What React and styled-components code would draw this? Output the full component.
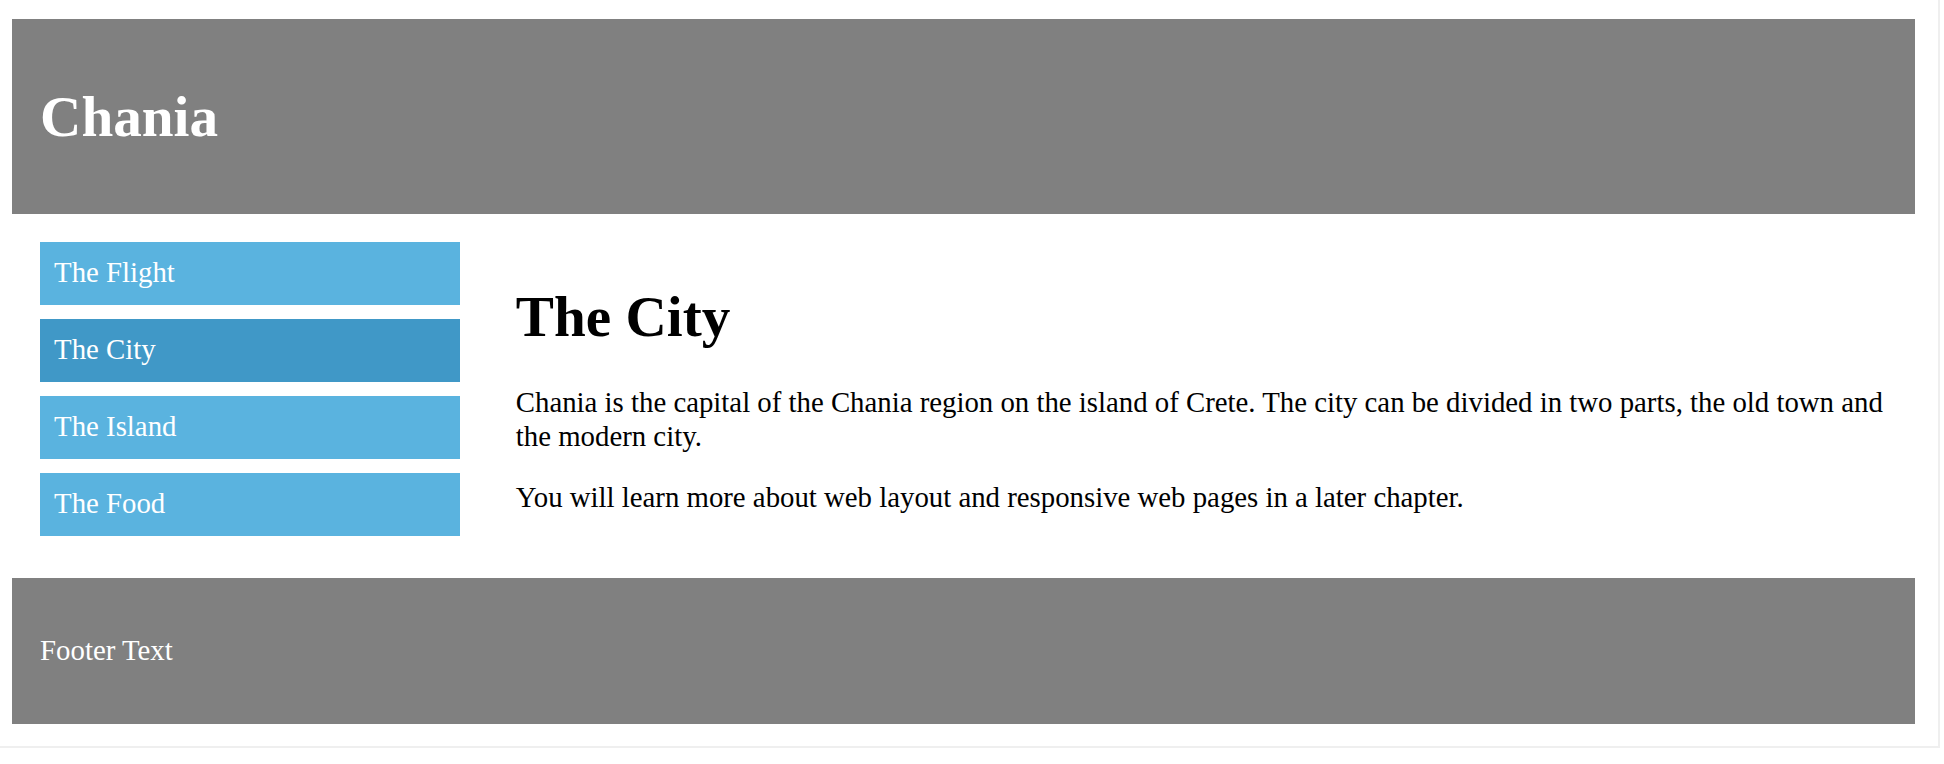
import React from "react";
import styled, { createGlobalStyle } from "styled-components";

const GlobalStyle = createGlobalStyle`
  html, body {
    margin: 0;
    padding: 0;
    background: #ffffff;
  }
  body {
    font-family: "Liberation Serif", "Times New Roman", Times, serif;
    font-size: 28.8px;
    color: #000000;
  }
`;

const Frame = styled.div`
  box-sizing: border-box;
  width: 1940px;
  height: 748px;
  padding: 18.6px 22.6px 0 12.4px;
  border-right: 2px solid #efefef;
  border-bottom: 2px solid #efefef;
`;

const Header = styled.header`
  background-color: #808080;
  color: #ffffff;
  padding: 27.7px;
`;

const Title = styled.h1`
  margin: 37.5px 0;
  font-size: 57.2px;
  line-height: 65.4px;
  font-weight: bold;
`;

const Row = styled.div`
  display: flex;
  align-items: flex-start;
`;

const Column = styled.div`
  box-sizing: border-box;
  width: ${(p) => p.$span}%;
  padding: 27.7px;
`;

const Menu = styled.ul`
  list-style: none;
  margin: 0;
  padding: 0;
`;

const MenuItem = styled.li`
  padding: 13.5px 14px 16.5px;
  margin-bottom: 14px;
  line-height: 33px;
  color: #ffffff;
  background-color: ${(p) => (p.$active ? "#4098c7" : "#5ab3df")};
`;

const Heading = styled.h1`
  margin: 41.5px 0 37.5px;
  font-size: 57.2px;
  line-height: 65.3px;
  font-weight: bold;
`;

const Text = styled.p`
  margin: 28.4px 0;
  line-height: 33.3px;
`;

const Footer = styled.footer`
  background-color: #808080;
  color: #ffffff;
  padding: 27.7px 27.7px 28.4px;
`;

const menu = ["The Flight", "The City", "The Island", "The Food"];

export default function App() {
  return (
    <>
      <GlobalStyle />
      <Frame>
        <Header>
          <Title>Chania</Title>
        </Header>
        <Row>
          <Column $span={25}>
            <Menu>
              {menu.map((item) => (
                <MenuItem key={item} $active={item === "The City"}>
                  {item}
                </MenuItem>
              ))}
            </Menu>
          </Column>
          <Column $span={75}>
            <Heading>The City</Heading>
            <Text>
              Chania is the capital of the Chania region on the island of
              Crete. The city can be divided in two parts, the old town and the
              modern city.
            </Text>
            <Text>
              You will learn more about web layout and responsive web pages in
              a later chapter.
            </Text>
          </Column>
        </Row>
        <Footer>
          <Text>Footer Text</Text>
        </Footer>
      </Frame>
    </>
  );
}
